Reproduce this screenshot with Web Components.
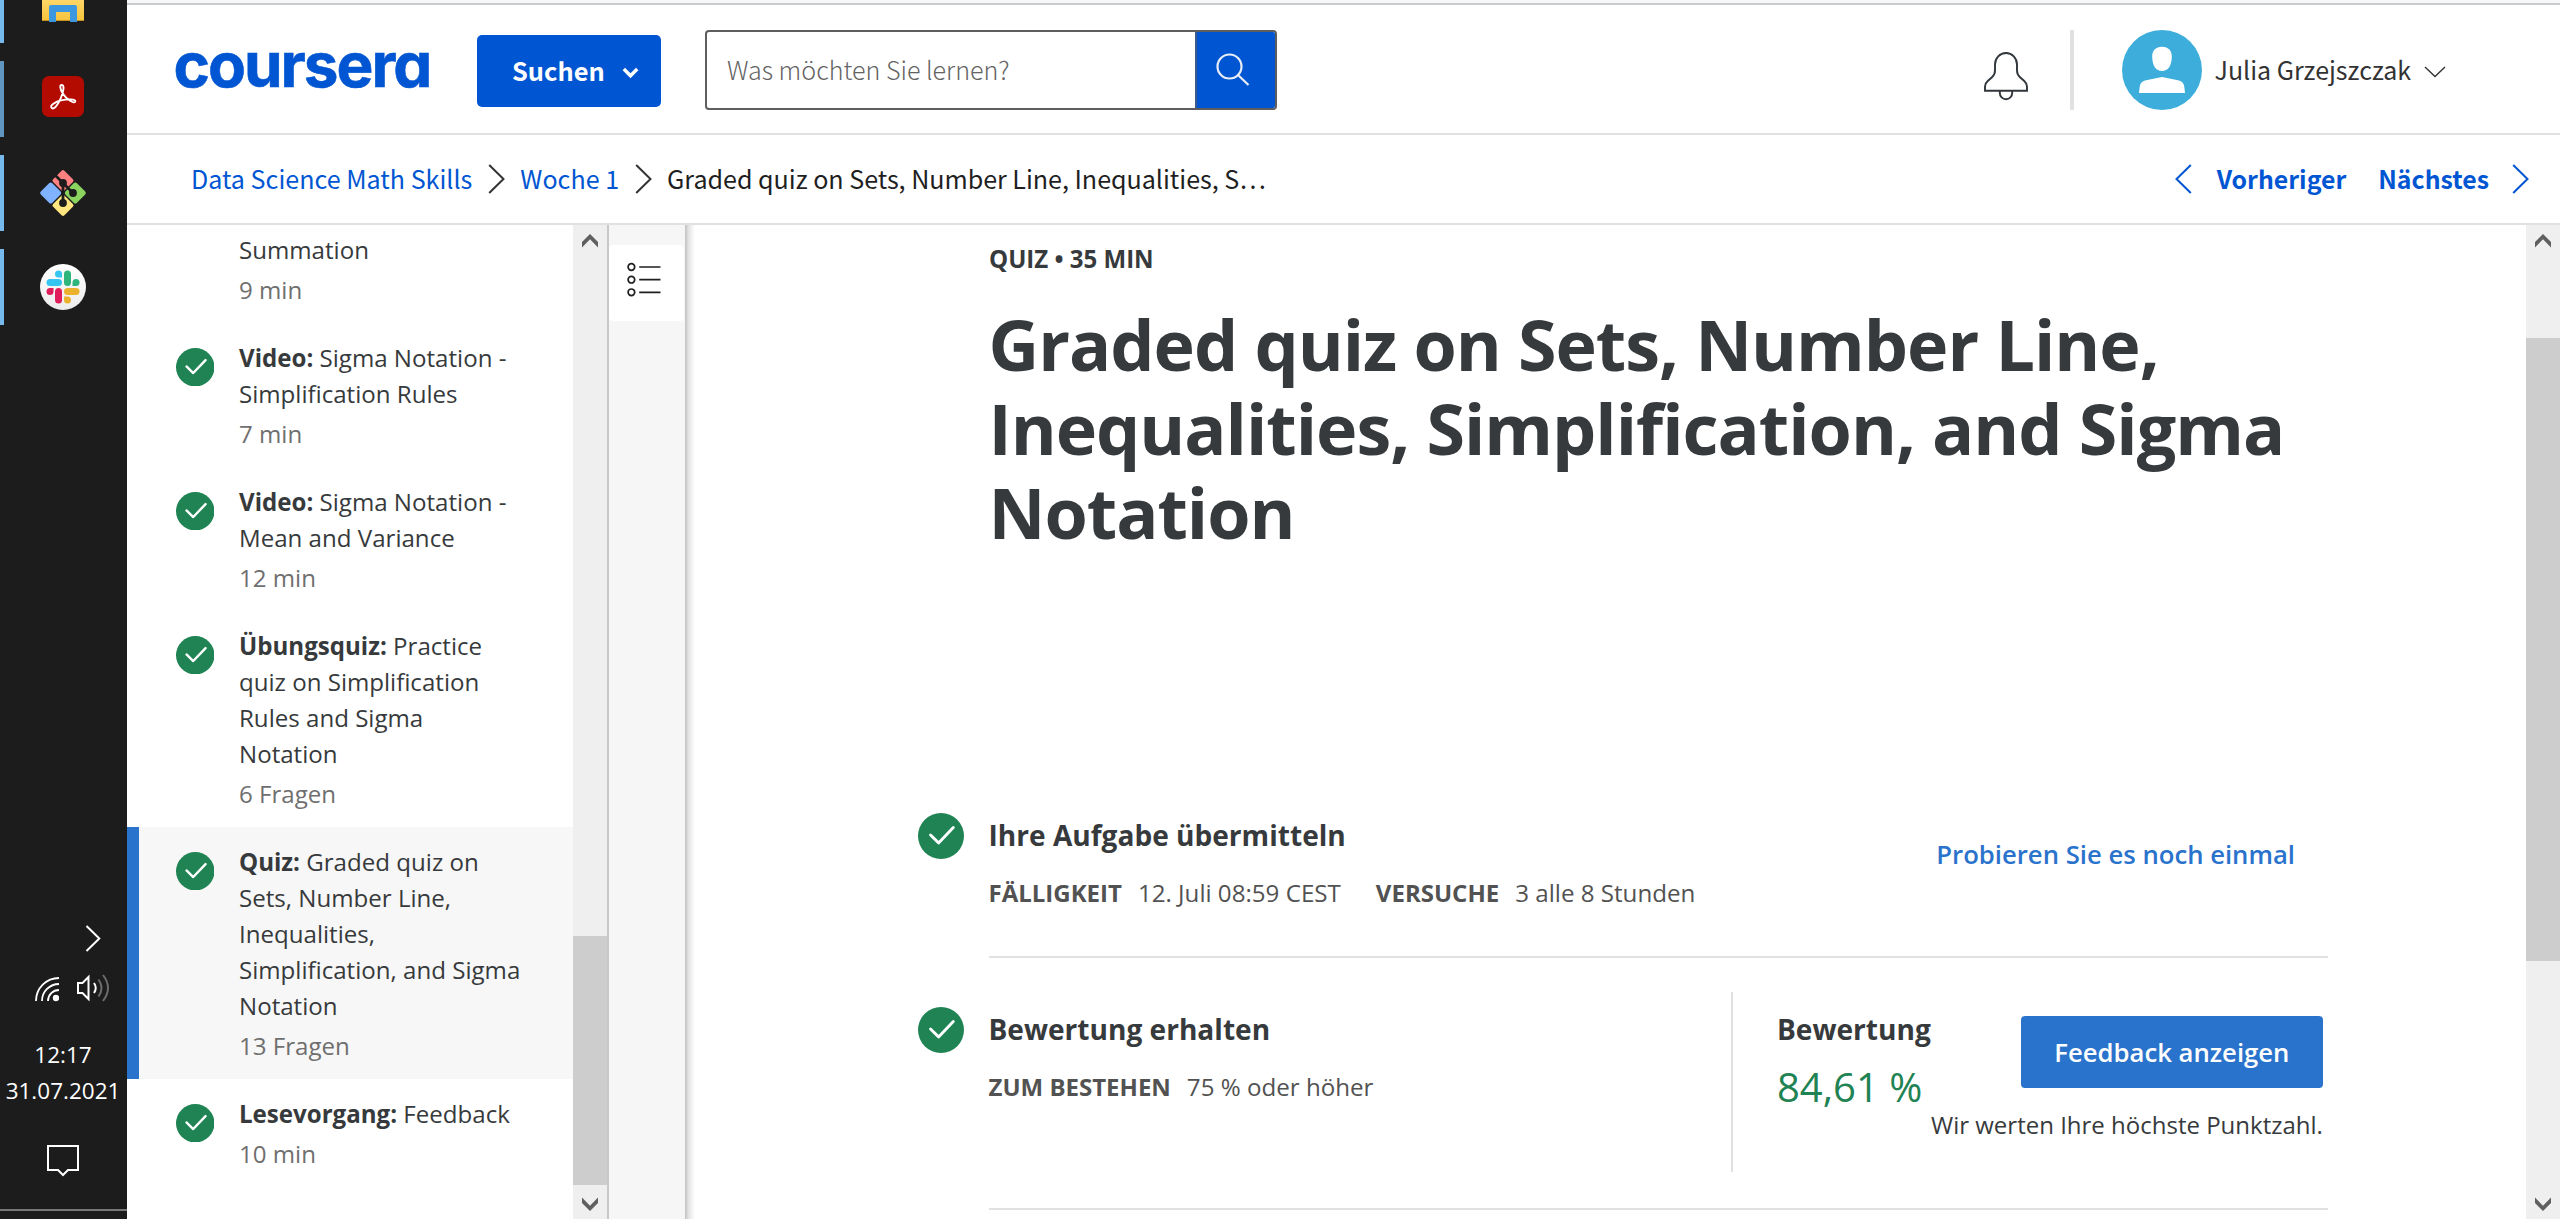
<!DOCTYPE html>
<html lang="de">
<head>
<meta charset="utf-8">
<title>Coursera</title>
<style>
  html, body { margin: 0; height: 100%; overflow: hidden; background: #fff; }
</style>
</head>
<body>
<course-app></course-app>

<script>
const UI = '"Open Sans", "Noto Sans", sans-serif';
const NAV = '"Noto Sans CJK JP", "Noto Sans", sans-serif';

function define(name, render) {
  customElements.define(name, class extends HTMLElement {
    connectedCallback() {
      if (this.shadowRoot) return;
      const t = document.createElement('template');
      t.innerHTML = render(this);
      this.attachShadow({ mode: 'open' }).append(t.content.cloneNode(true));
    }
  });
}

/* Green "completed" badge */
define('done-badge', () => `
  <style>:host{display:block;flex:none;width:var(--size,38.5px);height:var(--size,38.5px)} svg{display:block;width:100%;height:100%}</style>
  <svg viewBox="0 0 40 40"><circle cx="20" cy="20" r="20" fill="#1f8354"/>
  <path d="M10.9 19.2 L17.9 26 L30.7 12.6" fill="none" stroke="#fff" stroke-width="2.5" stroke-linecap="round" stroke-linejoin="round"/></svg>`);

/* Classic scrollbar: "before" is the track above the thumb, "thumb" its height */
define('scroll-bar', el => `
  <style>
    :host{display:flex;flex-direction:column;flex:none;background:#efefef}
    svg{display:block;flex:none;align-self:center;width:16px;height:14px}
    .up{margin-top:9px}
    .thumb{flex:none;background:#cdcdcd;height:${el.getAttribute('thumb')}px;margin-top:${el.getAttribute('before')}px}
    .down{margin-top:auto;margin-bottom:8px}
  </style>
  <svg class="up" viewBox="0 0 16 14"><path d="M8 0 L16 8 V13.5 L8 5.2 L0 13.5 V8 Z" fill="#5f5f5f"/></svg>
  <div class="thumb"></div>
  <svg class="down" viewBox="0 0 16 14"><path d="M8 14 L16 6 V.5 L8 8.8 L0 .5 V6 Z" fill="#5f5f5f"/></svg>`);

define('task-cell', el => `
  <style>
    :host{display:flex;box-sizing:border-box;width:127px;height:76px;margin-bottom:18px;
      border-left:4px solid ${el.hasAttribute('dim') ? '#5f95bf' : '#76b9ed'};
      padding-left:35px;align-items:center}
    :host([cut]){height:43px;align-items:flex-start}
  </style><slot></slot>`);

define('task-bar', () => `
  <style>
    :host{display:flex;flex-direction:column;flex:none;width:127px;height:1219px;background:#1c1c1c;color:#fff;font:22.500px/36px ${UI}}
    svg{display:block;flex:none}
    .chev{margin:582px 0 0 85px}
    .tray{display:flex;gap:18px;margin:21px 0 0 35px}
    .clock{margin-top:33.500px;text-align:center;padding-right:1px}
    .note{margin:35.500px 0 0 46px}
    .edge{height:2px;background:#787878;margin-top:31px}
  </style>
  <task-cell cut><svg width="48" height="24" viewBox="0 0 48 24">
    <defs><linearGradient id="f" x2="0" y2="1"><stop offset="0" stop-color="#ffd667"/><stop offset="1" stop-color="#f5c33b"/></linearGradient></defs>
    <rect x="3" y="0" width="42" height="21" fill="url(#f)"/><rect x="3" y="20" width="42" height="1" fill="#c99322"/>
    <path d="M10 22 V7 Q10 5 12 5 H36 Q38 5 38 7 V22 H31 V12 H17 V22 Z" fill="#3a97e0"/></svg></task-cell>
  <task-cell dim><svg width="48" height="48" viewBox="0 0 48 48">
    <rect x="3" y="1" width="42" height="41" rx="7" fill="#b30b00"/>
    <path d="M12.800 33 C9.800 30.500 17 26.500 22 25.400 C29 23.800 37 24 36.300 26.600 C35.500 29.300 27.500 24.500 23.800 18.500 C20.800 13.500 20.500 9.800 22.800 10 C25.800 10.300 24.500 16.500 21.800 23 C19.200 29.500 15.200 35 12.800 33 Z" fill="none" stroke="#fff" stroke-width="1.900"/></svg></task-cell>
  <task-cell><svg width="48" height="48" viewBox="0 0 48 48">
    <g transform="translate(24 24) rotate(45)">
      <rect x="-16.700" y="-16.700" width="16" height="16" rx="2" fill="#ff8080"/>
      <rect x=".7" y="-16.700" width="16" height="16" rx="2" fill="#8bd45f"/>
      <rect x="-16.700" y=".7" width="16" height="16" rx="2" fill="#80b3ff"/>
      <rect x=".7" y=".7" width="16" height="16" rx="2" fill="#ffe680"/>
    </g>
    <path d="M16 6 L24 14 V34 M24 14 L34 24" stroke="#1c1c1c" stroke-width="2.800" fill="none"/>
    <circle cx="24" cy="14" r="3.900" fill="#1c1c1c"/><circle cx="34" cy="24" r="3.900" fill="#1c1c1c"/><circle cx="24" cy="34" r="3.900" fill="#1c1c1c"/></svg></task-cell>
  <task-cell><svg width="48" height="48" viewBox="0 0 48 48">
    <defs><linearGradient id="s" x2="0" y2="1"><stop offset="0" stop-color="#fff"/><stop offset="1" stop-color="#ececec"/></linearGradient></defs>
    <circle cx="24" cy="24" r="23" fill="url(#s)"/>
    <g fill="#36c5f0"><rect x="7.500" y="16" width="15.500" height="7" rx="3.500"/><path d="M23 7.500 V14.500 H19.500 A3.500 3.500 0 1 1 23 11 Z"/></g>
    <g fill="#2eb67d"><rect x="25" y="7.500" width="7" height="15.500" rx="3.500"/><path d="M33.500 23 V19.500 A3.500 3.500 0 1 1 37 23 Z"/></g>
    <g fill="#ecb22e"><rect x="25" y="25" width="15.500" height="7" rx="3.500"/><path d="M25 33.500 H28.500 A3.500 3.500 0 1 1 25 37 Z"/></g>
    <g fill="#e01e5a"><rect x="16" y="25" width="7" height="15.500" rx="3.500"/><path d="M14.500 25 V28.500 A3.500 3.500 0 1 1 11 25 Z"/></g></svg></task-cell>
  <svg class="chev" width="16" height="27" viewBox="0 0 16 27"><path d="M1.500 1 L14.300 13.500 L1.500 26" fill="none" stroke="#fff" stroke-width="2"/></svg>
  <div class="tray">
    <svg width="24" height="30" viewBox="0 0 24 30"><g fill="none" stroke="#fff" stroke-width="1.800"><path d="M1 28 A23 23 0 0 1 24 5"/><path d="M7 28 A17 17 0 0 1 24 11"/><path d="M13 28 A11 11 0 0 1 24 17"/></g><circle cx="21" cy="25" r="3.200" fill="#fff"/></svg>
    <svg width="33" height="30" viewBox="0 0 33 30"><g fill="none" stroke="#fff" stroke-width="2"><path d="M1 10 H5.500 L11.500 4 V26 L5.500 20 H1 Z"/><path d="M17 10 Q20.500 15 17 20"/><g stroke="#6b6b6b"><path d="M21.500 6.500 Q27.500 15 21.500 23.500"/><path d="M26 2 Q36 15 26 28"/></g></g></svg>
  </div>
  <div class="clock">12:17<br>31.07.2021</div>
  <svg class="note" width="34" height="34" viewBox="0 0 34 34"><path d="M2 2 H32 V26 H22 L17 31 L12 26 H2 Z" fill="none" stroke="#fff" stroke-width="2"/></svg>
  <div class="edge"></div>`);

define('site-header', () => `
  <style>
    :host{display:flex;align-items:center;flex:none;box-sizing:border-box;height:132px;border-top:2px solid #c9cacc;border-bottom:2px solid #e1e1e1;padding-left:46.500px;font:25.100px/36px ${NAV}}
    svg{display:block;flex:none}
    .logo{width:303.500px;font:700 62px/80px Inter,sans-serif;font-feature-settings:"cv11";letter-spacing:-2px;color:#0056d2;-webkit-text-stroke:.6px #0056d2;padding-bottom:8px;box-sizing:border-box}
    .find{display:flex;align-items:center;gap:17px;box-sizing:border-box;width:184px;height:72px;margin-top:4px;padding:0 0 2px 35px;border-radius:5px;background:#0056d2;color:#fff;font-weight:700;font-size:25.400px}
    .find svg{margin-top:5px}
    .search{display:flex;box-sizing:border-box;width:572px;height:80px;margin:2px 0 0 44px;border:2px solid #5e5e5e;border-radius:4px;overflow:hidden;color:#636363;font-weight:300}
    .field{flex:1;padding-left:20px;line-height:74px}
    .go{display:flex;align-items:center;box-sizing:border-box;width:80px;padding-left:19px;border-left:2px solid #3d5a8a;background:#0056d2}
    .bell{margin:14px 0 0 706px}
    .rule{width:4px;height:80px;background:#e1e1e1;margin:2px 0 0 41px}
    .avatar{margin:2px 0 0 48px}
    .name{margin-left:12.500px;color:#333;font-size:25px}
    .more{margin:6px 0 0 13px}
  </style>
  <div class="logo">coursera</div>
  <div class="find">Suchen<svg width="17" height="13" viewBox="0 0 17 13"><path d="M1.800 3 L8.500 9.800 L15.200 3" fill="none" stroke="#fff" stroke-width="3.400"/></svg></div>
  <div class="search"><div class="field">Was möchten Sie lernen?</div>
    <div class="go"><svg width="34" height="34" viewBox="0 0 34 34"><g fill="none" stroke="#e9edf5" stroke-width="2.200"><circle cx="13.500" cy="13.500" r="12"/><path d="M22 22 L32.500 32"/></g></svg></div></div>
  <svg class="bell" width="46" height="49" viewBox="-1 0 46 49"><g fill="none" stroke="#30363b" stroke-width="1.900"><path d="M1 38.800 V34.500 Q1 31.500 4 28.800 L8 25.200 Q11 22.500 11 18.500 V12.500 A11 11.500 0 0 1 33 12.500 V18.500 Q33 22.500 36 25.200 L40 28.800 Q43 31.500 43 34.500 V38.800 Z"/><path d="M15.800 39 V41 A6.200 6.300 0 0 0 28.200 41 V39"/></g></svg>
  <div class="rule"></div>
  <svg class="avatar" width="80" height="80" viewBox="0 0 80 80"><circle cx="40" cy="40" r="40" fill="#3daddb"/><path d="M40 16.800 C46.500 16.800 50 21 49.800 27 C49.500 36 46 41 40 41 C34 41 30.500 36 30.200 27 C30 21 33.500 16.800 40 16.800 Z M17 63 L17.800 56 Q18.600 51.500 24 50.300 L40 47 L56 50.300 Q61.400 51.500 62.200 56 L63 63 Z" fill="#fff"/></svg>
  <div class="name">Julia Grzejszczak</div>
  <svg class="more" width="22" height="12" viewBox="0 0 22 12"><path d="M1 1 L11 10.500 L21 1" fill="none" stroke="#333" stroke-width="1.400"/></svg>`);

const angle = (dir, colour) => `<svg width="17" height="30" viewBox="0 0 17 30"><path d="${dir === 'next' ? 'M1.200 1 L15.500 15 L1.200 29' : 'M15.800 1 L1.500 15 L15.800 29'}" fill="none" stroke="${colour}" stroke-width="2"/></svg>`;

define('crumb-bar', () => `
  <style>
    :host{display:flex;align-items:center;flex:none;box-sizing:border-box;height:90px;border-bottom:2px solid #e1e1e1;padding:0 31px 0 64px;font:25.100px/36px ${NAV};color:#1f1f1f}
    svg{display:block;flex:none} .a{color:#0056d2} b{font-size:24.850px;color:#0056d2}
    .t,b{padding-bottom:2px}
    .last{letter-spacing:-.025px}
    .sep{margin:0 15px 0 16px}
    nav{display:flex;align-items:center;margin-left:auto}
    b:first-of-type{margin:0 32px 0 24.500px} b:last-of-type{margin-right:23px}
  </style>
  <span class="t a">Data Science Math Skills</span><span class="sep">${angle('next', '#333')}</span>
  <span class="t a">Woche 1</span><span class="sep">${angle('next', '#333')}</span>
  <span class="t last">Graded quiz on Sets, Number Line, Inequalities, S…</span>
  <nav>${angle('prev', '#0056d2')}<b>Vorheriger</b><b>Nächstes</b>${angle('next', '#0056d2')}</nav>`);

define('lesson-item', el => `
  <style>
    :host{display:flex;box-sizing:border-box;padding:16px 0 16px 48.500px;font:24.100px/36px ${UI};color:#373a3c;white-space:nowrap}
    :host([active]){background:#f7f7f7;border-left:12px solid #2a73cc;padding-left:36.500px}
    done-badge{margin:8.500px 25px 0 0}
    .blank{width:38.500px;margin-right:25px}
    .text{padding-top:.8px;margin-bottom:-.8px}
    .meta{margin-top:4px;color:#6f6f6f}
    ::slotted(b){font-weight:700}
  </style>
  ${el.hasAttribute('plain') ? '<div class="blank"></div>' : '<done-badge></done-badge>'}
  <div class="text"><div><slot></slot></div><div class="meta">${el.getAttribute('meta')}</div></div>`);

define('lesson-list', () => `
  <style>:host{display:flex;flex:none;height:994px;overflow:hidden}
    .items{width:446px;margin-top:-9.700px} scroll-bar{width:34px}
    .rail{width:78px;box-sizing:border-box;border-left:2px solid #c8c8c8;background:#f6f6f6}
    .tab{box-sizing:border-box;width:75px;height:76px;margin-top:20px;background:#fff;border-radius:4px;padding:17px 0 0 17px}
    svg{display:block}
  </style>
  <div class="items">
    <lesson-item plain meta="9 min">Summation</lesson-item>
    <lesson-item meta="7 min"><b>Video:</b> Sigma Notation -<br>Simplification Rules</lesson-item>
    <lesson-item meta="12 min"><b>Video:</b> Sigma Notation -<br>Mean and Variance</lesson-item>
    <lesson-item meta="6 Fragen"><b>Übungsquiz:</b> Practice<br>quiz on Simplification<br>Rules and Sigma<br>Notation</lesson-item>
    <lesson-item active meta="13 Fragen"><b>Quiz:</b> Graded quiz on<br>Sets, Number Line,<br>Inequalities,<br>Simplification, and Sigma<br>Notation</lesson-item>
    <lesson-item meta="10 min"><b>Lesevorgang:</b> Feedback</lesson-item>
  </div>
  <scroll-bar before="688" thumb="249"></scroll-bar>
  <div class="rail"><div class="tab"><svg width="36" height="36" viewBox="0 0 36 36"><g fill="none" stroke="#1f1f1f" stroke-width="1.700">
    <circle cx="5.400" cy="5" r="3.300"/><circle cx="5.400" cy="17.700" r="3.300"/><circle cx="5.400" cy="30.300" r="3.300"/>
    <path d="M13.200 5 H34.500 M13.200 17.700 H34.500 M13.200 30.300 H34.500"/></g></svg></div></div>`);

define('quiz-step', el => `
  <style>
    :host{display:flex;gap:25px;--size:46px}
    .body{display:flex;justify-content:space-between;box-sizing:border-box;width:1339px;border-bottom:2px solid #e1e1e1}
    done-badge,.text{margin-top:var(--top,0)}
    h2{margin:1px 0 0;font:700 28.080px/42px ${UI};color:#373a3c}
    .meta{display:flex;margin:18.500px 0 0;font:24.150px/36px ${UI};color:#525252}
    ::slotted(b){font-size:24px;margin-right:16px}
    ::slotted(span){margin-right:35px}
  </style>
  <done-badge></done-badge>
  <div class="body"><div class="text"><h2>${el.getAttribute('heading')}</h2><div class="meta"><slot></slot></div></div><slot name="side"></slot></div>`);

define('grade-box', () => `
  <style>
    :host{display:flex;justify-content:space-between;box-sizing:border-box;width:596.500px;height:180px;margin-top:34px;border-left:2px solid #e1e1e1;padding:16px 6px 0 44px;font:24px/36px ${UI};color:#373a3c}
    h3{margin:0;font:700 28.080px/42px ${UI}}
    .score{color:#1f8354;font-size:40px;line-height:56px;margin-top:9px;white-space:nowrap}
    .grade{width:154px;flex:none}
    .right{display:flex;flex-direction:column;align-items:flex-end;margin-top:8px;white-space:nowrap}
    .btn{box-sizing:border-box;width:302px;height:72px;padding-top:1px;border-radius:4px;background:#2a73cc;color:#fff;font-weight:600;font-size:25.700px;line-height:72px;text-align:center}
    .note{margin-top:19px}
  </style>
  <div class="grade"><h3>Bewertung</h3><div class="score">84,61 %</div></div>
  <div class="right"><div class="btn">Feedback anzeigen</div><div class="note">Wir werten Ihre höchste Punktzahl.</div></div>`);

define('quiz-page', () => `
  <style>
    :host{display:flex;flex:1;min-width:0;height:994px;overflow:hidden;background:linear-gradient(to right,#c2c2c2,#e6e6e6 4px,#fff 10px)}
    main{flex:1;min-width:0;padding-left:232.500px}
    .kind{margin:15.500px 0 0 71.500px;font:700 24.050px/36px ${UI};color:#373a3c}
    h1{margin:25.500px 0 259px 71px;font:700 70px/84px ${UI};letter-spacing:-1px;color:#373a3c;white-space:nowrap}
    .retry{margin:24px 32.500px 0 0;font:600 25.700px/36px ${UI};color:#2a73cc;white-space:nowrap}
    scroll-bar{width:34px}
    quiz-step{height:145px} .second{height:252px;--top:49px}
  </style>
  <main>
    <div class="kind">QUIZ • 35 MIN</div>
    <h1>Graded quiz on Sets, Number Line,<br>Inequalities, Simplification, and Sigma<br>Notation</h1>
    <quiz-step heading="Ihre Aufgabe übermitteln"><b>FÄLLIGKEIT</b><span>12. Juli 08:59 CEST</span><b>VERSUCHE</b><span>3 alle 8 Stunden</span><div slot="side" class="retry">Probieren Sie es noch einmal</div></quiz-step>
    <quiz-step class="second" heading="Bewertung erhalten"><b>ZUM BESTEHEN</b><span>75 % oder höher</span><grade-box slot="side"></grade-box></quiz-step>
  </main>
  <scroll-bar before="90" thumb="623"></scroll-bar>`);

define('course-app', () => `
  <style>
    :host{display:flex;width:2560px;height:1219px;overflow:hidden}
    .window{display:flex;flex-direction:column;flex:1;min-width:0}
    .strip{flex:none;height:3px;background:#f6f7f9}
    .content{display:flex;flex:none}
  </style>
  <task-bar></task-bar>
  <div class="window"><div class="strip"></div><site-header></site-header><crumb-bar></crumb-bar>
    <div class="content"><lesson-list></lesson-list><quiz-page></quiz-page></div></div>`);
</script>
</body>
</html>
